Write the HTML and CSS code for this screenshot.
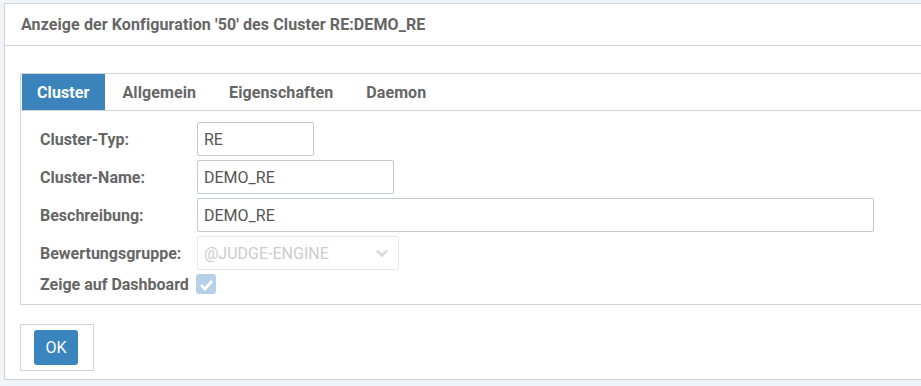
FILE: index.html
```html
<!DOCTYPE html>
<html lang="de">
<head>
<meta charset="utf-8">
<title>Cluster RE:DEMO_RE</title>
<link rel="stylesheet" href="styles.css">
</head>
<body>
<div class="page">
  <div class="panel">
    <div class="panel-header">Anzeige der Konfiguration '50' des Cluster RE:DEMO_RE</div>
    <div class="panel-body">
      <div class="tabs">
        <div class="tab-bar">
          <div class="tab active">Cluster</div>
          <div class="tab">Allgemein</div>
          <div class="tab">Eigenschaften</div>
          <div class="tab">Daemon</div>
        </div>
        <div class="tab-content">
          <label class="lbl">Cluster-Typ:</label>
          <div class="field"><input class="input w-typ" type="text" value="RE"></div>
          <label class="lbl">Cluster-Name:</label>
          <div class="field"><input class="input w-name" type="text" value="DEMO_RE"></div>
          <label class="lbl">Beschreibung:</label>
          <div class="field"><input class="input w-desc" type="text" value="DEMO_RE"></div>
          <label class="lbl">Bewertungsgruppe:</label>
          <div class="field">
            <div class="select">
              <span>@JUDGE-ENGINE</span>
              <svg class="chev" width="14" height="10" viewBox="0 0 14 10"><path d="M2 2.5 L7 7.5 L12 2.5" fill="none" stroke="#dddddd" stroke-width="3"/></svg>
            </div>
          </div>
          <label class="lbl lbl-check">Zeige auf Dashboard</label>
          <div class="field check-field">
            <span class="checkbox"><svg width="15" height="13" viewBox="0 0 15 13"><path d="M2 7 L6 11 L13 3" fill="none" stroke="#ffffff" stroke-width="2.8"/></svg></span>
          </div>
        </div>
      </div>
      <div class="actions">
        <button class="btn" type="button">OK</button>
      </div>
    </div>
  </div>
</div>
</body>
</html>
```

FILE: styles.css
```css
html, body {
  margin: 0;
  padding: 0;
}
body {
  background: #eef4f7;
  overflow: hidden;
  font-family: Roboto, "Liberation Sans", Arial, sans-serif;
  width: 921px;
  height: 386px;
}
.page {
  padding: 3px 0 0 4px;
}
.panel {
  width: 940px;
  background: #ffffff;
  border: 1px solid #d0d4d8;
  box-sizing: border-box;
  height: 377px;
}
.panel-header {
  height: 41px;
  border-bottom: 1px solid #d0d4d8;
  padding-left: 16px;
  display: flex;
  align-items: center;
  font-size: 16px;
  font-weight: 700;
  letter-spacing: 0.1px;
  color: #666666;
}
.panel-body {
  padding: 27px 0 0 15px;
}
.tabs {
  border: 1px solid #d0d4d8;
  border-right: none;
}
.tab-bar {
  display: flex;
  height: 36px;
  padding-left: 1px;
  border-bottom: 1px solid #d0d4d8;
}
.tab {
  padding: 0 15px;
  margin-right: 3px;
  display: flex;
  align-items: center;
  font-size: 16px;
  font-weight: 700;
  letter-spacing: 0.1px;
  color: #666666;
}
.tab.active {
  background: #3a84bb;
  color: #ffffff;
}
.tab-content {
  display: grid;
  grid-template-columns: 157px auto;
  row-gap: 4px;
  padding: 11px 0 10px 19px;
  align-items: center;
}
.lbl {
  font-size: 16px;
  font-weight: 700;
  color: #666666;
}
.field {
  display: flex;
}
.input {
  box-sizing: border-box;
  height: 34px;
  border: 1px solid #c6cacf;
  border-radius: 2px;
  padding: 0 6px;
  font-family: Roboto, "Liberation Sans", Arial, sans-serif;
  font-size: 16px;
  color: #555555;
  background: #fff;
  outline: none;
}
.w-typ { width: 117px; }
.w-name { width: 197px; }
.w-desc { width: 677px; }
.select {
  box-sizing: border-box;
  width: 202px;
  height: 34px;
  border: 1px solid #e8e8e8;
  border-radius: 2px;
  padding: 0 9px 0 6px;
  display: flex;
  align-items: center;
  justify-content: space-between;
  font-size: 16px;
  color: #cccccc;
}
.chev {
  display: block;
}
.lbl-check {
  white-space: nowrap;
}
.check-field {
  height: 20px;
}
.checkbox {
  width: 20px;
  height: 20px;
  margin-left: -1px;
  background: #b6d1e7;
  border-radius: 3px;
  display: flex;
  align-items: center;
  justify-content: center;
}
.actions {
  margin-top: 19px;
  width: 74px;
  height: 47px;
  box-sizing: border-box;
  border: 1px solid #d0d4d8;
  padding: 5px 0 0 13px;
}
.btn {
  width: 44px;
  height: 35px;
  border: none;
  border-radius: 3px;
  background: #3a85bd;
  color: #ffffff;
  font-family: Roboto, "Liberation Sans", Arial, sans-serif;
  font-size: 16px;
  padding: 0;
  cursor: pointer;
}
```
